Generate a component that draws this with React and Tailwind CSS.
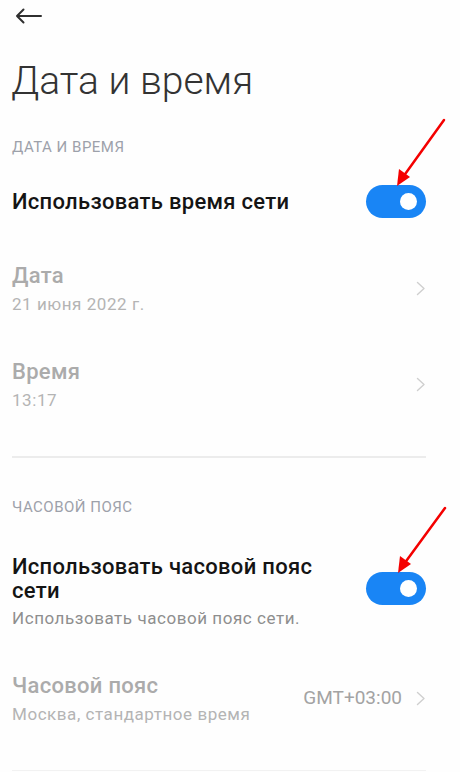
import React from 'react';

const Toggle = () => (
  <div className="relative w-[60px] h-[33px] rounded-full bg-[#1985f5] shrink-0">
    <div className="absolute right-[9px] top-[8px] w-[17px] h-[17px] rounded-full bg-white" />
  </div>
);

const Chevron = () => (
  <svg width="10" height="15" viewBox="0 0 10 15" fill="none" className="shrink-0">
    <path d="M1.5 1.5 L8 7.5 L1.5 13.5" stroke="#cfcfcf" strokeWidth="1.4" strokeLinecap="round" strokeLinejoin="round" />
  </svg>
);

const SectionTitle = ({ children, className = '' }) => (
  <div className={`text-[15px] leading-5 tracking-[0.5px] text-[#9da1aa] ${className}`}>{children}</div>
);

const LinkRow = ({ title, subtitle, value, className = '' }) => (
  <div className={`flex items-center justify-between ${className}`}>
    <div>
      <div className="text-[22px] leading-[26px] tracking-[0.3px] font-medium text-[#ababab]">{title}</div>
      <div className="mt-[5px] text-[17px] leading-5 tracking-[0.55px] text-[#b4b4b4]">{subtitle}</div>
    </div>
    <div className="flex items-center gap-[14px]">
      {value && <span className="text-[19px] text-[#a3a3a3]">{value}</span>}
      <Chevron />
    </div>
  </div>
);

const App = () => {
  return (
    <div className="relative w-[460px] h-[772px] overflow-hidden bg-[#fefefe] font-['Roboto',sans-serif]">
      {/* top bar */}
      <div className="h-8 flex items-center pl-[15px]">
        <svg width="27" height="16" viewBox="0 0 27 16" fill="none">
          <path d="M26 8 H2 M8.5 1.5 L2 8 L8.5 14.5" stroke="#2f2f2f" strokeWidth="2" strokeLinecap="round" strokeLinejoin="round" />
        </svg>
      </div>

      <div className="pl-3 pr-[34px]">
        <h1 className="mt-[25px] text-[39px] leading-[48px] font-light text-[#333333] -ml-[1px]">Дата и время</h1>

        <SectionTitle className="mt-8">ДАТА И ВРЕМЯ</SectionTitle>

        <div className="mt-[28px] h-[33px] flex items-center justify-between">
          <span className="text-[22px] leading-[26px] tracking-[0.3px] font-medium text-[#141414]">Использовать время сети</span>
          <Toggle />
        </div>

        <LinkRow className="mt-[45px]" title="Дата" subtitle="21 июня 2022 г." />
        <LinkRow className="mt-[45px]" title="Время" subtitle="13:17" />

        <div className="mt-[46px] h-[2px] bg-[#ececec]" />

        <SectionTitle className="mt-[39px]">ЧАСОВОЙ ПОЯС</SectionTitle>

        <div className="mt-[38px] flex items-center justify-between">
          <div className="w-[320px]">
            <div className="text-[22px] leading-6 tracking-[0.3px] font-medium text-[#141414]">Использовать часовой пояс сети</div>
            <div className="mt-[5px] text-[17px] leading-5 tracking-[0.55px] text-[#8e8e8e]">Использовать часовой пояс сети.</div>
          </div>
          <div className="-mt-[6px]">
            <Toggle />
          </div>
        </div>

        <LinkRow className="mt-[45px]" title="Часовой пояс" subtitle="Москва, стандартное время" value="GMT+03:00" />

        <div className="mt-[46px] h-px bg-[#f2f2f2]" />
      </div>

      {/* red annotation arrows */}
      <svg className="absolute inset-0 pointer-events-none" width="460" height="772" viewBox="0 0 460 772">
        <line x1="444" y1="120" x2="403" y2="177" stroke="#f40000" strokeWidth="2.5" strokeLinecap="round" />
        <polygon points="397,186 399,169 410,177" fill="#f40000" />
        <line x1="445" y1="508" x2="404" y2="564" stroke="#f40000" strokeWidth="2.5" strokeLinecap="round" />
        <polygon points="398,573 400,556 411,564" fill="#f40000" />
      </svg>
    </div>
  );
};

export default App;
